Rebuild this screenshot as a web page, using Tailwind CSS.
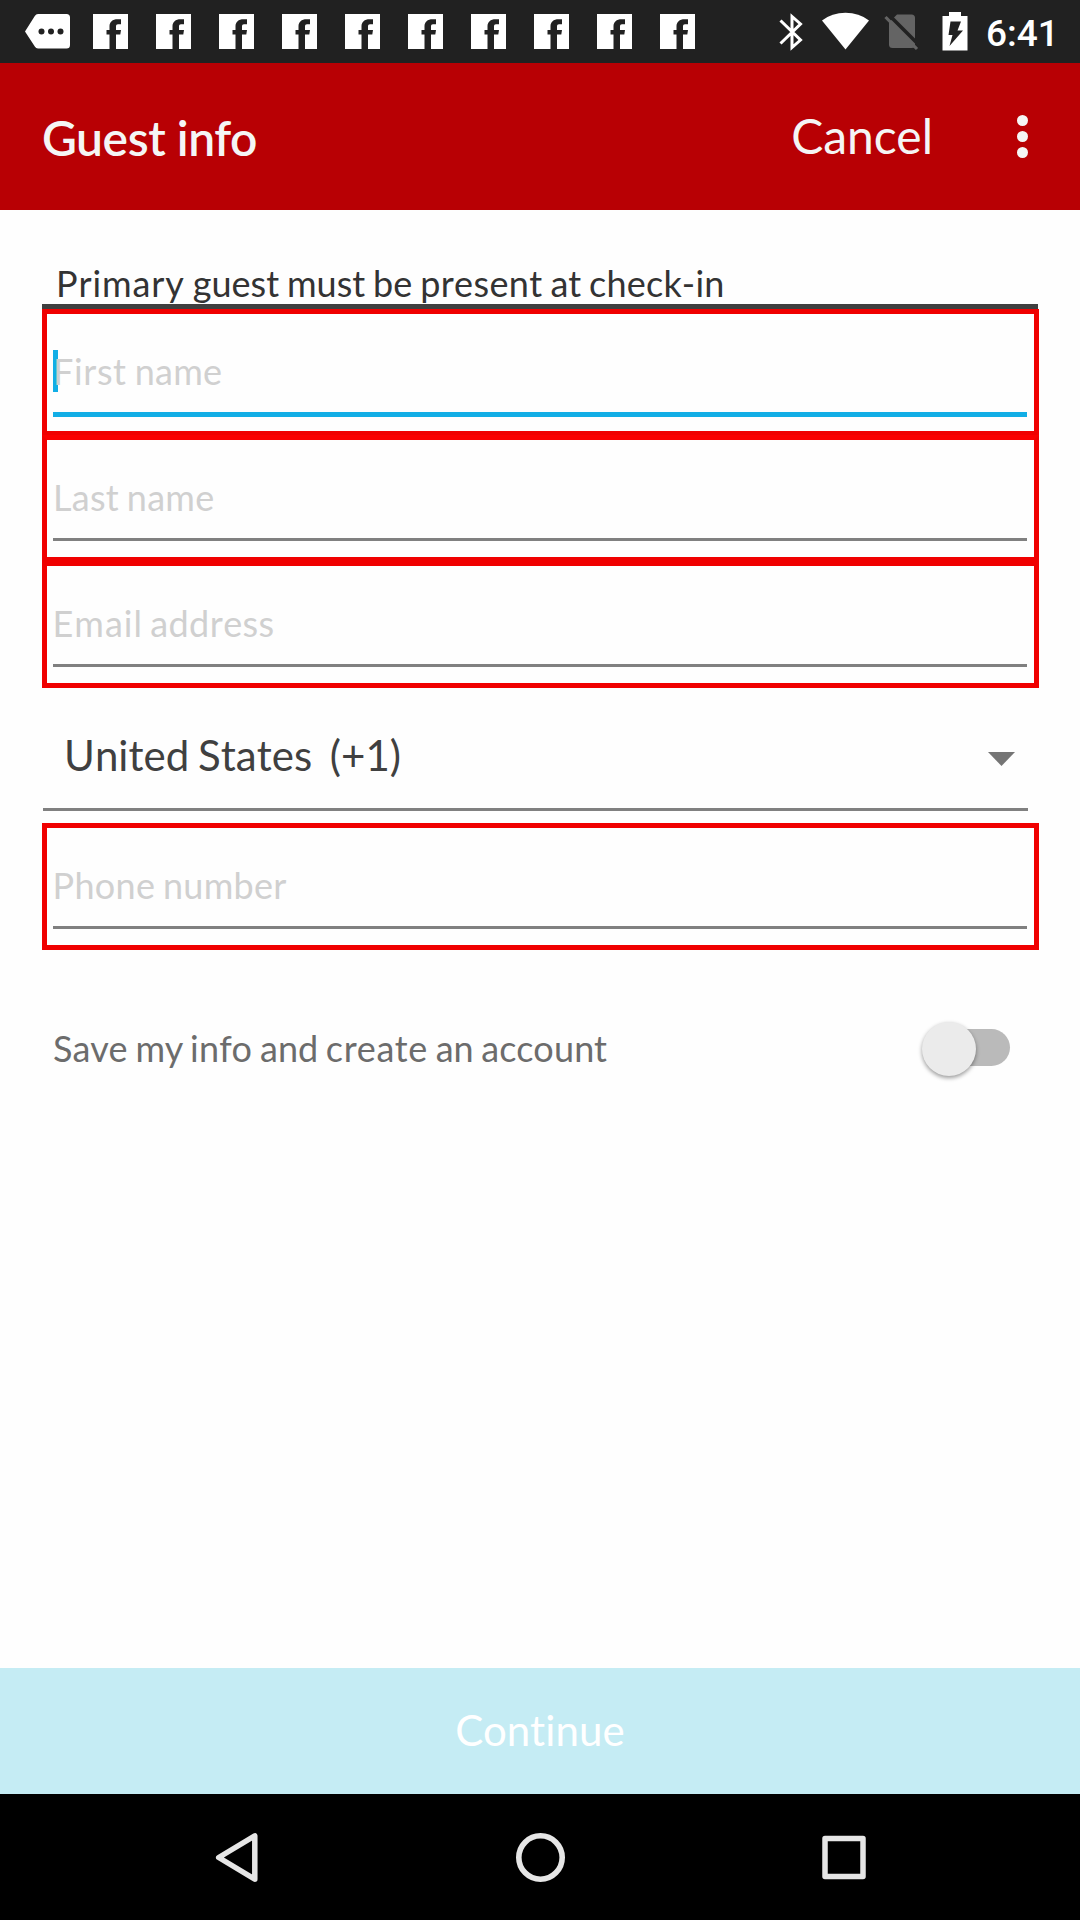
<!DOCTYPE html>
<html lang="en">
<head>
<meta charset="utf-8">
<title>Guest info</title>
<script src="https://cdn.jsdelivr.net/npm/@tailwindcss/browser@4"></script>
</head>
<body class="bg-white">
<div class="w-[1080px] h-[1920px] overflow-hidden flex flex-col bg-[#fefefe] font-[Lato,sans-serif] whitespace-nowrap [font-variant-ligatures:none]">
  <svg width="0" height="0" class="absolute">
    <symbol id="fb" viewBox="0 0 35 35"><path fill="#fff" d="M0 0H35V35H23V20.500H27.300L28 16H23V12.500C23 11 23.600 10.300 25 10.300H28V5.300H24.500C19.500 5.300 16.500 8 16.500 12.500V16H13.500V20.500H16.500V35H0Z"/></symbol>
  </svg>
  <header class="h-[63px] shrink-0 bg-[#212121] flex items-start">
    <svg class="ml-[25px] mt-[14px]" width="45" height="35" viewBox="0 0 45 35"><path fill="#fff" d="M13 0H41.500Q45 0 45 3.500V31Q45 34.500 41.500 34.500H13Q11 34.500 9.800 32.500L0 17.500L9.800 2Q11 0 13 0Z"/><g fill="#212121"><circle cx="16.500" cy="17.500" r="3"/><circle cx="26" cy="17.500" r="3"/><circle cx="35.500" cy="17.500" r="3"/></g></svg>
    <div class="flex gap-7 ml-[23px] mt-[14px]">
      <svg width="35" height="35"><use href="#fb"/></svg><svg width="35" height="35"><use href="#fb"/></svg><svg width="35" height="35"><use href="#fb"/></svg><svg width="35" height="35"><use href="#fb"/></svg><svg width="35" height="35"><use href="#fb"/></svg><svg width="35" height="35"><use href="#fb"/></svg><svg width="35" height="35"><use href="#fb"/></svg><svg width="35" height="35"><use href="#fb"/></svg><svg width="35" height="35"><use href="#fb"/></svg><svg width="35" height="35"><use href="#fb"/></svg>
    </div>
    <svg class="ml-[84px] mt-[12px]" width="25" height="40" viewBox="0 0 25 40" fill="none" stroke="#fff" stroke-width="3"><path d="M1.500 8.500L21.500 28L13 35.500V4.500L21.500 12L1.500 31.500"/></svg>
    <svg class="ml-[18px] mt-[12px]" width="47" height="38" viewBox="0 0 47 38"><path fill="#fff" d="M0 8.500Q10 .8 23.500 .8T47 8.500L23.500 37.500Z"/></svg>
    <svg class="ml-[15px] mt-[13px]" width="36" height="38" viewBox="0 0 36 38"><path fill="#646464" d="M13 1.500H27.500Q31 1.500 31 5V34Q30 35 27.500 35H8.500Q5 35 5 31.500V9.500Z"/><path d="M4 1L36 33" stroke="#212121" stroke-width="3.500"/><path d="M1.500 4L33 36" stroke="#646464" stroke-width="3.200"/></svg>
    <svg class="ml-[22px] mt-[12px]" width="26" height="39" viewBox="0 0 26 39"><path fill="#fff" d="M7 0H19V4H25.500V38.500H.5V4H7Z"/><path fill="#212121" d="M8.500 9.500H19L15.500 18.500H21L7.500 34L10.500 23H6.500Z"/></svg>
    <span class="font-[Roboto,sans-serif] font-medium text-white text-[37px] leading-[44px] ml-[18px] mt-[12px]">6:41</span>
  </header>
  <div class="h-[147px] shrink-0 bg-[#b80004] flex items-start text-[#f5f5f5]">
    <h1 class="ml-[42px] mt-[47px] text-[48px] leading-[56px] font-semibold tracking-[-0.45px]">Guest info</h1>
    <div class="ml-auto mt-[45px] text-[48px] leading-[56px]">Cancel</div>
    <svg class="ml-[84px] mr-[52px] mt-[52px]" width="11" height="43" viewBox="0 0 11 43" fill="#f5f5f5"><circle cx="5.500" cy="5.500" r="5.500"/><circle cx="5.500" cy="21.500" r="5.500"/><circle cx="5.500" cy="37.500" r="5.500"/></svg>
  </div>
  <main class="flex-1 flex flex-col pl-[42px] pt-[52px] [font-kerning:none]">
    <div class="w-[996px] h-[47px] pl-[14px] border-b-[5px] border-[#3f3f3f] text-[36px] leading-[42px] text-[#333] [word-spacing:-1.3px]"><span class="tracking-[0.9px]">Primary</span> guest must be <span class="tracking-[0.35px]">present</span> at <span class="tracking-[0.2px]">check-in</span></div>
    <div class="w-[997px] h-[127px] border-[5px] border-[#f00000] pl-[6px] pr-[7px] pt-[35px]">
      <div class="relative h-[68px] border-b-[5px] border-[#12aee6] text-[36px] leading-[44px] text-[#d0d0d0] [word-spacing:-1.5px]"><i class="absolute left-0 top-[1px] w-[5px] h-[42px] bg-[#12aee6]"></i><span class="relative tracking-[0.3px]"><span class="tracking-[0.6px]">First</span> name</span></div>
    </div>
    <div class="w-[997px] h-[127px] -mt-px border-[5px] border-[#f00000] border-t-[#fa0000] pl-[6px] pr-[7px] pt-[35px]">
      <div class="h-[66px] border-b-[3px] border-[#808080] text-[36px] leading-[44px] text-[#d0d0d0] tracking-[0.3px] [word-spacing:-1.8px]">Last name</div>
    </div>
    <div class="w-[997px] h-[127px] -mt-px border-[5px] border-[#f00000] pl-[6px] pr-[7px] pt-[35px]">
      <div class="h-[66px] border-b-[3px] border-[#808080] text-[36px] leading-[44px] text-[#d0d0d0] tracking-[0.4px] indent-[-0.5px] [word-spacing:-2.3px]"><span class="tracking-[1px]">Email</span> address</div>
    </div>
    <div class="w-[985px] h-[123px] ml-px mb-[12px] border-b-[3px] border-[#808080] flex items-start justify-between pl-[21px] pr-[13px] text-[#404040]">
      <div class="mt-[42px] text-[42px] leading-[50px] whitespace-pre [word-spacing:-1.9px]">United States  (+1)</div>
      <svg class="mt-[64px]" width="27" height="14" viewBox="0 0 27 14"><path fill="#757575" d="M0 0H27L13.500 14Z"/></svg>
    </div>
    <div class="w-[997px] h-[127px] border-[5px] border-[#f00000] pl-[6px] pr-[7px] pt-[35px]">
      <div class="h-[66px] border-b-[3px] border-[#808080] text-[36px] leading-[44px] text-[#d0d0d0] tracking-[0.3px] indent-[-0.5px] [word-spacing:-1.8px]">Phone number</div>
    </div>
    <div class="flex items-start w-[968px] mt-[71px] pl-[11px] justify-between text-[#6c6c6c]">
      <div class="mt-[5px] text-[36px] leading-[44px] [font-kerning:normal] [word-spacing:-1.6px]"><span class="tracking-[0.25px]">Save</span> my <span class="tracking-[0.4px]">info</span> and <span class="tracking-[0.7px]">create</span> an <span class="tracking-[0.15px]">account</span></div>
      <div class="relative w-[88px] h-[56px]">
        <i class="absolute left-[20px] top-[8px] w-[68px] h-[37px] rounded-full bg-[#bababa]"></i>
        <i class="absolute left-0 top-px w-[54px] h-[54px] rounded-full bg-[#ebebeb] shadow-[0_2px_4px_rgba(0,0,0,0.4)]"></i>
      </div>
    </div>
  </main>
  <div class="h-[126px] shrink-0 bg-[#c5ecf4] flex justify-center items-start text-white text-[42px] leading-[50px] pt-[37px] tracking-[0.1px]">Continue</div>
  <nav class="h-[126px] shrink-0 bg-black" aria-label="System">
    <svg width="1080" height="126" viewBox="0 0 1080 126" fill="none" stroke="#e6e6e6" stroke-linejoin="round"><path stroke-width="5.500" d="M254.800 41.800V85.200L218.700 63.500Z"/><circle cx="540.500" cy="63.500" r="21.700" stroke-width="5.600"/><rect x="825" y="44.500" width="38" height="38" stroke-width="5.500"/></svg>
  </nav>
</div>
</body>
</html>
